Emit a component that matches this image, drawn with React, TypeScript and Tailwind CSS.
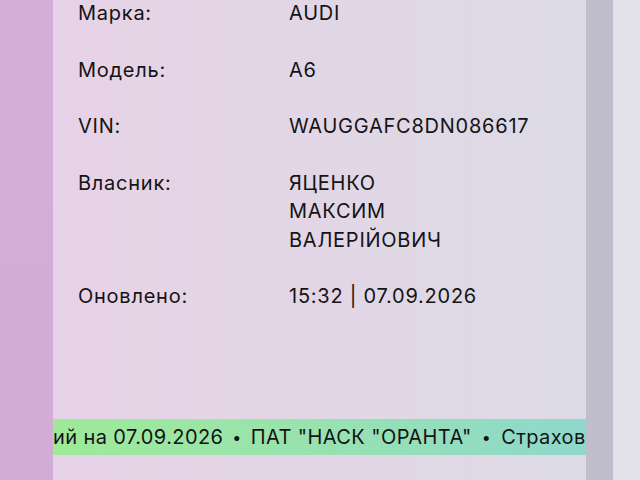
import React from "react";

const rows: { label: string; value: string[] }[] = [
  { label: "Марка:", value: ["AUDI"] },
  { label: "Модель:", value: ["A6"] },
  { label: "VIN:", value: ["WAUGGAFC8DN086617"] },
  { label: "Власник:", value: ["ЯЦЕНКО", "МАКСИМ", "ВАЛЕРІЙОВИЧ"] },
  { label: "Оновлено:", value: ["15:32 | 07.09.2026"] },
];

export default function App() {
  return (
    <div
      className="flex h-[480px] w-[640px] overflow-hidden text-[#141414]"
      style={{ fontFamily: "Inter, 'Liberation Sans', sans-serif" }}
    >
      <div className="w-[53px] shrink-0 bg-gradient-to-b from-[#d5aed8] to-[#d1acd4]" />
      <div className="relative w-[533px] shrink-0 overflow-hidden bg-gradient-to-r from-[#e7d2e7] via-[#e2d6e6] to-[#dcdbe5]">
        <div className="-mt-[1px] flex flex-col gap-[28px] pl-[25px]">
          {rows.map((r) => (
            <div key={r.label} className="flex text-[20px] leading-[28.5px] tracking-[0.75px]">
              <div className="w-[211px] shrink-0">{r.label}</div>
              <div className="flex flex-col">
                {r.value.map((v) => (
                  <span key={v}>{v}</span>
                ))}
              </div>
            </div>
          ))}
        </div>
        <div className="absolute left-0 top-[419px] flex h-[36px] w-full items-center overflow-hidden whitespace-nowrap bg-gradient-to-r from-[#9eea98] via-[#98e2b0] to-[#8ed8cc] text-[20px] tracking-[0.4px]">
          <span>ий на 07.09.2026</span>
          <span className="mx-[9px] text-[16px]">•</span>
          <span>ПАТ "НАСК "ОРАНТА"</span>
          <span className="mx-[10px] text-[16px]">•</span>
          <span>Страховий поліс</span>
        </div>
      </div>
      <div className="w-[27px] shrink-0 bg-[#c0bdcd]" />
      <div className="flex-1 bg-[#e3e1ea]" />
    </div>
  );
}
